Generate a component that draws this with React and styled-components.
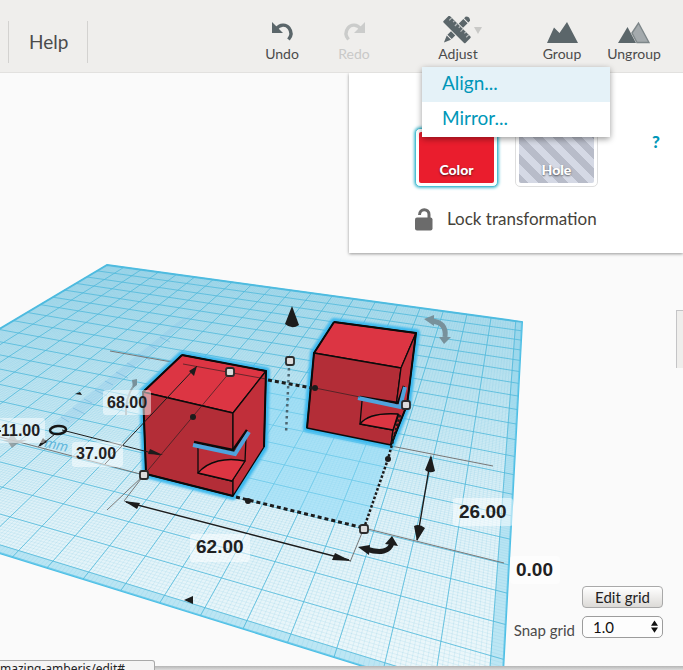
import styled, { createGlobalStyle } from "styled-components";

const App = () => {
  return (
    <Page>
      <GlobalStyle />
      <Toolbar>
        <HelpLink href="#help">Help</HelpLink>
        <Tools>
          <ToolGroup>
            <Tool icon={<UndoIcon />} label="Undo" />
            <Tool icon={<RedoIcon />} label="Redo" disabled />
          </ToolGroup>
          <ToolGroup>
            <Tool icon={<AdjustIcon />} label="Adjust" caret />
            <Menu>
              <MenuItem $active>Align...</MenuItem>
              <MenuItem>Mirror...</MenuItem>
            </Menu>
          </ToolGroup>
          <ToolGroup>
            <Tool icon={<GroupIcon />} label="Group" />
            <Tool icon={<UngroupIcon />} label="Ungroup" />
          </ToolGroup>
        </Tools>
      </Toolbar>
      <Stage>
        <Scene />
        <Inspector>
          <Swatches>
            <Swatch $selected>
              <SwatchFill $color="#ea1d2d">Color</SwatchFill>
            </Swatch>
            <Swatch>
              <SwatchFill $color="repeating-linear-gradient(45deg, #b8bcc9 0 7px, #d5d9e5 7px 14px)">
                Hole
              </SwatchFill>
            </Swatch>
            <InfoLink href="#info">?</InfoLink>
          </Swatches>
          <LockButton>
            <LockIcon />
            Lock transformation
          </LockButton>
        </Inspector>
        <SideTab aria-label="Toggle panel" />
        <GridControls>
          <EditButton>Edit grid</EditButton>
          <SnapLabel htmlFor="snap">Snap grid</SnapLabel>
          <SelectBox>
            <SnapSelect id="snap" defaultValue="1.0">
              <option>0.1</option>
              <option>1.0</option>
              <option>2.0</option>
            </SnapSelect>
            <SelectArrows viewBox="0 0 8 14">
              <path d="M4 0 L8 6 H0 Z M4 14 L8 8 H0 Z" />
            </SelectArrows>
          </SelectBox>
        </GridControls>
      </Stage>
      <BottomEdge />
      <StatusBubble>mazing-amberis/edit#</StatusBubble>
    </Page>
  );
};

export default App;

const Tool = ({ icon, label, caret, disabled }) => (
  <ToolButton disabled={disabled}>
    {icon}
    {label}
    {caret && <Caret viewBox="0 0 8 7"><path d="M0 0 H8 L4 7 Z" /></Caret>}
  </ToolButton>
);

const UndoIcon = () => (
  <ToolIcon viewBox="0 0 32 28">
    <path d="M6 6 V17 H17 Z" />
    <path d="M10 13 C14 8 20 8 23 12 C26 16 25.500 20 22.500 23.500" fill="none" stroke="currentColor" strokeWidth="3.400" />
  </ToolIcon>
);

const RedoIcon = () => (
  <ToolIcon viewBox="0 0 32 28">
    <path d="M27 6 V17 H16 Z" />
    <path d="M23 13 C19 8 13 8 10 12 C7 16 7.500 20 10.500 23.500" fill="none" stroke="currentColor" strokeWidth="3.400" />
  </ToolIcon>
);

const AdjustIcon = () => (
  <ToolIcon viewBox="0 0 32 28">
    <g transform="translate(15 13.500) rotate(45)">
      <path d="M-3 -15.500 Q0 -18.500 3 -15.500 V-13 H-3 Z M-3 -12 H3 V10.500 H-3 Z M-3 11.500 H3 L0 18.500 Z" />
    </g>
    <g transform="translate(15 13.500) rotate(-45)">
      <rect x="-5.500" y="-15" width="11" height="30" fill="#efeeec" />
      <rect x="-4.500" y="-15.500" width="9" height="31" rx="1" />
      <path
        d="M1 -12 H4.500 M2.500 -8 H4.500 M1 -4 H4.500 M2.500 0 H4.500 M1 4 H4.500 M2.500 8 H4.500 M1 12 H4.500"
        stroke="#b9bdbe"
        strokeWidth="1.200"
      />
    </g>
  </ToolIcon>
);

const GroupIcon = () => (
  <ToolIcon viewBox="0 0 32 28">
    <path d="M1 27 L8 11.500 L13.500 17 L21 6 L32 27 Z" />
  </ToolIcon>
);

const UngroupIcon = () => (
  <ToolIcon viewBox="0 0 32 28">
    <path d="M14 17 L20.500 7 L31 26.500 H19 Z" fill="#a4aaad" stroke="#7d8689" strokeWidth="1.400" />
    <path d="M0 27 L9.500 11 L18 27 Z" />
  </ToolIcon>
);

const LockIcon = () => (
  <svg width="18" height="23" viewBox="0 0 18 23">
    <rect x="0" y="9.500" width="17.500" height="13" rx="2" fill="#6b6b6b" />
    <path d="M4.500 7 C4.500 0 14 0 14 6.500 V11" fill="none" stroke="#6b6b6b" strokeWidth="3" />
  </svg>
);

// corners of the workplane on screen: back left, back right, front right, front left
const CORNERS = [[107, 265], [522, 322], [501, 709], [-248, 476]];
const CELLS = 20.25;

const project = (col, row) => {
  const [[x0, y0], [x1, y1], [x2, y2], [x3, y3]] = CORNERS;
  const u = col / CELLS;
  const v = row / CELLS;
  const dx1 = x1 - x2;
  const dx2 = x3 - x2;
  const dx3 = x0 - x1 + x2 - x3;
  const dy1 = y1 - y2;
  const dy2 = y3 - y2;
  const dy3 = y0 - y1 + y2 - y3;
  const det = dx1 * dy2 - dx2 * dy1;
  const g = (dx3 * dy2 - dx2 * dy3) / det;
  const h = (dx1 * dy3 - dx3 * dy1) / det;
  const w = g * u + h * v + 1;
  const x = ((x1 - x0 + g * x1) * u + (x3 - x0 + h * x3) * v + x0) / w;
  const y = ((y1 - y0 + g * y1) * u + (y3 - y0 + h * y3) * v + y0) / w;
  return `${x.toFixed(2)} ${y.toFixed(2)}`;
};

const gridPath = (step) => {
  let d = "";
  for (let i = 0; i <= 20 / step; i++) {
    const t = i * step;
    d += `M${project(t, 0)} L${project(t, CELLS)} M${project(0, t)} L${project(CELLS, t)} `;
  }
  return d;
};

const MAJOR = gridPath(1);
const MINOR = gridPath(0.1);

const LABELS = [
  { text: "68.00", x: 107, y: 408, size: 16, box: [103, 390, 48, 25] },
  { text: "11.00", x: 1, y: 436, size: 16, box: [-10, 418, 55, 25] },
  { text: "37.00", x: 76, y: 459, size: 16, box: [72, 442, 51, 25] },
  { text: "62.00", x: 196, y: 553, size: 19, box: [190, 534, 60, 28] },
  { text: "26.00", x: 459, y: 518, size: 19, box: [453, 498, 60, 28] },
  { text: "0.00", x: 516, y: 576, size: 19, box: [510, 556, 50, 28] },
];

const HANDLES = [[144, 475], [230, 372], [364, 529], [290, 361], [406, 405]];
const DOTS = [[193, 417], [248, 501], [315, 388], [388, 459]];

const Scene = () => (
  <SceneSvg viewBox="0 73 683 593" preserveAspectRatio="xMinYMin slice">
    <defs>
      <linearGradient id="plane" x1="0" y1="265" x2="0" y2="670" gradientUnits="userSpaceOnUse">
        <stop offset="0" stopColor="#aeddec" />
        <stop offset="0.35" stopColor="#c9e9f3" />
        <stop offset="0.6" stopColor="#e0f2f8" />
        <stop offset="1" stopColor="#ecf7fa" />
      </linearGradient>
      <filter id="glow" x="-20%" y="-20%" width="140%" height="140%">
        <feGaussianBlur stdDeviation="1" />
      </filter>
    </defs>

    <path
      d={`M${project(0, 0)} L${project(CELLS, 0)} L${project(CELLS, CELLS)} L${project(0, CELLS)} Z`}
      fill="url(#plane)"
      stroke="#4bbfe6"
      strokeWidth="2"
    />
    <path
      d={`M${project(0, CELLS)} L${project(CELLS, CELLS)} L${project(CELLS, 0)} L${project(20, 0)} L${project(20, 20)} L${project(0, 20)} Z`}
      fill="#8ed5ed"
      opacity="0.5"
    />
    <path d={MINOR} stroke="#69bfdc" strokeWidth="0.600" opacity="0.26" fill="none" />
    <path d={MAJOR} stroke="#50b9db" strokeWidth="1" opacity="0.8" fill="none" />

    {/* ruler laid on the plane */}
    <path d="M52 424 L178 322 L196 312 L66 429 Z" fill="#7fbfe6" opacity="0.25" />
    <path
      d="M61 417 l8 5 M73 408 l12 6 M84 399 l8 4 M95 390 l12 6 M105 381 l8 4 M116 372 l12 6 M127 363 l8 4 M138 354 l12 6 M149 345 l8 4 M160 337 l10 5"
      stroke="#62aedb"
      opacity="0.5"
    />
    <SceneText x="44" y="447" fontSize="14" fontStyle="italic" fill="#62b7dc" transform="rotate(12 44 447)">
      mm
    </SceneText>

    {/* selection footprint */}
    <path d="M233 496 L264 450 L268 380 L312 390 L307 428 L391 447 L364 528 Z" fill="#84d8f7" opacity="0.5" />

    <g stroke="#777" strokeWidth="1" fill="none">
      <path d="M110 351 L183 364 M0 437 L144 475 L124 501 M144 475 L107 510 M364 528 L350 562 M364 528 L504 563 M391 446 L493 466" />
    </g>

    <g filter="url(#glow)" fill="none" stroke="#3db9ee" strokeWidth="8" strokeLinejoin="round">
      <path d="M182 355 L266 371 L264 447 L233 496 L146 474 L143 392 Z" />
      <path d="M334 322 L416 333 L407 405 L391 445 L307 428 L314 353 Z" />
    </g>

    {/* front cube */}
    <g stroke="#0b0b0b" strokeWidth="1.300" strokeLinejoin="round">
      <path d="M182 355 L266 371 L233 413 L143 392 Z" fill="#dc3543" />
      <path d="M143 392 L233 413 L233 496 L146 474 Z" fill="#b32d37" />
      <path d="M266 371 L264 447 L233 496 L233 413 Z" fill="#c12f3a" />
      <path d="M198 445 L234 452 L246 438 L245 461 L232 481 L198 473 Z" fill="#bb2e39" />
      <path d="M198 473 C208 461 226 457 245 461 L232 481 Z" fill="#dd3542" />
      <path d="M182 355 L266 371 L264 447 M233 496 L146 474 L143 392 L182 355" fill="none" strokeWidth="2" />
      <path d="M194 442 L233 450 L247 430" fill="none" strokeWidth="2.500" />
      <path d="M193 445 L235 454 L249 432" fill="none" stroke="#4fa3dc" strokeWidth="4" strokeLinejoin="miter" />
    </g>

    {/* back cube */}
    <g stroke="#0b0b0b" strokeWidth="1.300" strokeLinejoin="round">
      <path d="M334 322 L416 333 L401 368 L314 353 Z" fill="#dc3543" />
      <path d="M314 353 L401 368 L391 445 L307 428 Z" fill="#b32d37" />
      <path d="M416 333 L407 405 L391 445 L401 368 Z" fill="#c12f3a" />
      <path d="M362 401 L400 406 L404 392 L398 416 L393 430 L360 424 Z" fill="#bb2e39" stroke="none" />
      <path d="M362 401 L360 424 L393 430 L399 414" fill="none" />
      <path d="M360 424 C367 415 382 413 398 414 L393 430 Z" fill="#dd3542" />
      <path d="M334 322 L416 333 L407 405 L391 445 M307 428 L314 353 L334 322" fill="none" strokeWidth="2" />
      <path d="M360 397 L398 403 L404 386" fill="none" strokeWidth="2.500" />
      <path d="M358 398 L400 407 L405 387" fill="none" stroke="#4fa3dc" strokeWidth="4" strokeLinejoin="miter" />
    </g>

    {/* measuring lines over the cubes */}
    <g stroke="#1c1c1c" strokeWidth="1" fill="none">
      <path d="M183 364 L266 379 M144 475 L230 372 M315 388 L360 397" opacity="0.6" />
      <path d="M105 464 L197 366 M62 430 L160 455 M55 434 L40 446" />
      <path d="M126 502 L349 560 M431 457 L417 540" strokeWidth="1.400" />
      <path d="M268 380 L312 388 M236 497 L364 528" strokeWidth="3" strokeDasharray="4 3" />
      <path d="M400 415 L388 459 L364 528" strokeWidth="2.500" strokeDasharray="2.500 2" />
      <path d="M289 368 L286 434" strokeWidth="2.500" strokeDasharray="2.500 3.500" stroke="#4c6570" />
    </g>
    <g fill="#1c1c1c">
      <path d="M197 366 L194 376 L189 371 Z M163 455 L148 454 L150 449 Z M38 447 L47 442 L43 438 Z" />
      <path d="M124 501 L140 503 L137 509 Z M351 561 L332 560 L335 553 Z" />
      <path d="M431 455 L425 470 Q430 474 435 471 Z M417 541 L414 526 Q419 523 425 528 Z" />
      <path d="M292 306 L285 324 Q292 330 299 325 Z" />
      <path d="M184 600 L193 596 V604 Z M75 394 L80 392 L82 395 Z" />
      {DOTS.map(([x, y]) => (
        <circle key={x} cx={x} cy={y} r="3" />
      ))}
    </g>
    <ellipse cx="58" cy="430" rx="8" ry="4" fill="none" stroke="#151515" strokeWidth="2.500" transform="rotate(-5 58 430)" />
    <path d="M2 440 H27 L17 444 L12 448 L8 442 Z M12 433 L17 440 L8 440 Z" fill="#8b9295" opacity="0.8" />

    {/* rotation arrows */}
    <g fill="none" stroke="#78919b" strokeWidth="5">
      <path d="M431 321 Q447 322 445 337" />
      <path d="M424 319 L434 315 L434 326 Z M439 337 L451 337 L444 344 Z" fill="#78919b" stroke="none" />
      <path d="M126 415 Q125 398 134 385" strokeWidth="2" stroke="#8fa5ad" />
      <path d="M132 380 L137 379 L137 385 L133 388 Z" fill="#78919b" stroke="none" />
    </g>
    <path d="M366 549 Q388 556 392 543" fill="none" stroke="#1c1c1c" strokeWidth="5" />
    <path d="M358 547 L370 545 L369 555 Z M385 544 L392 536 L398 546 Z" fill="#1c1c1c" />

    {HANDLES.map(([x, y]) => (
      <rect key={x} x={x - 4} y={y - 4} width="8" height="8" rx="2" fill="#dcdcdc" stroke="#2b2b2b" strokeWidth="1.800" />
    ))}
    {LABELS.map(({ text, x, y, size, box: [bx, by, w, h] }) => (
      <g key={text}>
        <rect x={bx} y={by} width={w} height={h} rx="3" fill="#fff" opacity="0.5" />
        <SceneText x={x} y={y} fontSize={size} fontWeight="bold" fill="#1f2122">
          {text}
        </SceneText>
      </g>
    ))}
    <rect x="-2" y="430" width="3" height="2" fill="#1f2122" />
  </SceneSvg>
);

const GlobalStyle = createGlobalStyle`
  * {
    box-sizing: border-box;
  }
  body {
    margin: 0;
    font-family: Lato, "Open Sans", sans-serif;
    color: #4b4b4b;
  }
  button {
    font: inherit;
    border: 0;
    padding: 0;
    background: none;
  }
`;

const Page = styled.div`
  position: relative;
  display: flex;
  flex-direction: column;
  height: 100vh;
  overflow: hidden;
  background: #fafafa;
`;

const Toolbar = styled.header`
  position: relative;
  z-index: 2;
  display: flex;
  align-items: center;
  justify-content: space-between;
  height: 73px;
  flex: none;
  padding: 0 13px 0 8px;
  background: #efeeec;
  border-bottom: 1px solid #e2e1df;
`;

const HelpLink = styled.a`
  padding: 0 19px 0 20px;
  margin-top: 12px;
  line-height: 42px;
  font-size: 19px;
  color: #4b4b4b;
  text-decoration: none;
  border: solid #d3d2d0;
  border-width: 0 1px;
`;

const Tools = styled.nav`
  display: flex;
  gap: 32px;
  align-self: stretch;
`;

const ToolGroup = styled.div`
  position: relative;
  display: flex;
`;

const ToolButton = styled.button`
  position: relative;
  display: flex;
  flex-direction: column;
  align-items: center;
  width: 72px;
  padding-top: 16px;
  font-size: 14px;
  line-height: 20px;
  color: ${({ disabled }) => (disabled ? "#c9c9c8" : "#4b4b4b")};
`;

const ToolIcon = styled.svg`
  width: 32px;
  height: 28px;
  fill: currentColor;
  color: #5b666a;

  ${ToolButton}:disabled & {
    color: #cbcccb;
  }
`;

const Caret = styled.svg`
  position: absolute;
  top: 27px;
  right: 12px;
  width: 8px;
  height: 7px;
  fill: #c9c9c7;
`;

const Menu = styled.div`
  position: absolute;
  top: 67px;
  left: 0;
  display: flex;
  flex-direction: column;
  width: 188px;
  background: #fff;
  border-radius: 2px;
  box-shadow: 0 2px 6px rgba(0, 0, 0, 0.4);
`;

const MenuItem = styled.button`
  padding: 0 20px 4px;
  font-size: 19px;
  line-height: 31px;
  text-align: left;
  color: #0097b8;
  background: ${({ $active }) => ($active ? "#e5f2f8" : "#fff")};
`;

const Stage = styled.main`
  position: relative;
  display: flex;
  flex: 1;
  flex-direction: column;
  align-items: flex-end;
  min-height: 0;
`;

const SceneSvg = styled.svg`
  position: absolute;
  inset: 0;
  width: 100%;
  height: 100%;
`;

const SceneText = styled.text`
  font-family: "Liberation Sans", Arial, sans-serif;
`;

const Inspector = styled.section`
  position: relative;
  display: flex;
  flex-direction: column;
  gap: 20px;
  width: 334px;
  height: 180px;
  padding: 55px 23px 0 66px;
  background: #fff;
  box-shadow: 0 1px 3px rgba(0, 0, 0, 0.4);
`;

const Swatches = styled.div`
  display: flex;
  gap: 17px;
`;

const Swatch = styled.button`
  width: 83px;
  height: 59px;
  padding: 3px;
  border: 1px solid ${({ $selected }) => ($selected ? "#4fbfd3" : "#dedede")};
  border-radius: 5px;
  background: #fff;
  box-shadow: ${({ $selected }) => ($selected ? "0 0 3px 1px #4fbfd3" : "none")};
`;

const SwatchFill = styled.span`
  display: flex;
  align-items: flex-end;
  justify-content: center;
  height: 100%;
  padding-bottom: 3px;
  border-radius: 2px;
  font-size: 14px;
  line-height: 20px;
  font-weight: 900;
  color: #fff;
  text-shadow: 0 1px 2px rgba(0, 0, 0, 0.6);
  background: ${({ $color }) => $color};
`;

const InfoLink = styled.a`
  margin-left: auto;
  padding-top: 4px;
  font-size: 17px;
  line-height: 20px;
  font-weight: 900;
  color: #0097b8;
  text-decoration: none;
`;

const LockButton = styled.button`
  display: flex;
  align-items: center;
  gap: 14px;
  font-size: 17px;
  line-height: 24px;
  color: #45423a;
`;

const SideTab = styled.button`
  width: 7px;
  height: 58px;
  margin-top: 57px;
  background: #efeeec;
  border: solid #c4c4c6;
  border-width: 1px 0 0 1px;
`;

const GridControls = styled.div`
  position: absolute;
  right: 20px;
  bottom: 27px;
  display: grid;
  grid-template-columns: auto 81px;
  gap: 7px;
  align-items: center;
`;

const EditButton = styled.button`
  grid-column: 2;
  height: 22px;
  font-size: 15px;
  line-height: 18px;
  color: #222;
  border: 1px solid #a9a9a9;
  border-radius: 4px;
  background: linear-gradient(#fff, #dcdad7);
`;

const SnapLabel = styled.label`
  padding-top: 6px;
  font-size: 15px;
  line-height: 18px;
`;

const SelectBox = styled.div`
  position: relative;
`;

const SnapSelect = styled.select`
  display: block;
  width: 100%;
  height: 22px;
  padding: 0 10px;
  font: inherit;
  font-size: 15px;
  line-height: 18px;
  color: #111;
  appearance: none;
  background: #fdfdfd;
  border: 1px solid #9c9c9c;
  border-radius: 5px;
`;

const SelectArrows = styled.svg`
  position: absolute;
  top: 4px;
  right: 5px;
  width: 7px;
  height: 13px;
  fill: #111;
  pointer-events: none;
`;

const BottomEdge = styled.div`
  height: 4px;
  flex: none;
  background: linear-gradient(#b5b5b5, #dcdcdc);
`;

const StatusBubble = styled.div`
  position: absolute;
  left: 0;
  bottom: -10px;
  width: 155px;
  height: 20px;
  font-family: "Noto Sans", sans-serif;
  font-size: 12px;
  line-height: 16px;
  color: #222;
  background: #f4f4f4;
  border: 1px solid #a8a8a8;
  border-left: 0;
  border-radius: 0 3px 0 0;
`;
